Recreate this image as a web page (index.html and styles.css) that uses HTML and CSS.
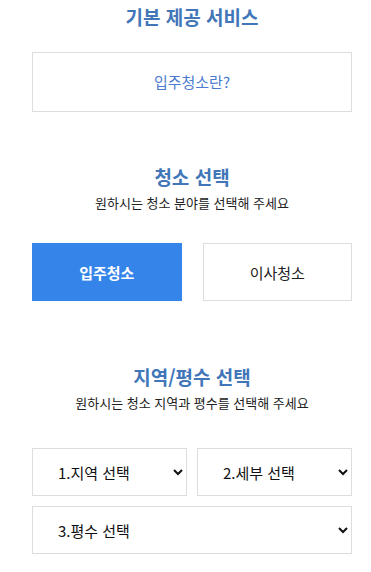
FILE: index.html
```html
<!DOCTYPE html>
<html lang="ko">
<head>
    <meta charset="UTF-8">
    <meta name="viewport" content="width=device-width, initial-scale=1.0">
    <title>입주청소 서비스 선택</title>
    <link rel="stylesheet" href="styles.css">
</head>
<body>
    <div class="container">
        <div class="section basic">
            <h2 class="section-title">기본 제공 서비스</h2>
            <a class="info-box" href="#">입주청소란?</a>
        </div>

        <div class="section choose">
            <h2 class="section-title">청소 선택</h2>
            <p class="section-desc">원하시는 청소 분야를 선택해 주세요</p>
            <div class="type-buttons">
                <button class="type-btn active" type="button">입주청소</button>
                <button class="type-btn" type="button">이사청소</button>
            </div>
        </div>

        <div class="section area">
            <h2 class="section-title">지역/평수 선택</h2>
            <p class="section-desc">원하시는 청소 지역과 평수를 선택해 주세요</p>
            <div class="select-grid">
                <select class="field">
                    <option>1.지역 선택</option>
                </select>
                <select class="field">
                    <option>2.세부 선택</option>
                </select>
                <select class="field wide">
                    <option>3.평수 선택</option>
                </select>
            </div>
        </div>
    </div>
</body>
</html>
```

FILE: styles.css
```css
body {
    margin: 0;
    background: #fff;
    font-family: "Noto Sans CJK KR", "Noto Sans", sans-serif;
    color: #222;
}

.container {
    width: 320px;
    padding: 4px 0 0 32px;
}

.section-title {
    margin: 0;
    text-align: center;
    font-size: 19px;
    line-height: 26px;
    font-weight: 700;
    color: #4176b9;
}

.section-desc {
    margin: 3px 0 0 0;
    text-align: center;
    font-size: 13px;
    line-height: 20px;
    color: #222;
}

.info-box {
    display: block;
    margin-top: 22px;
    height: 58px;
    line-height: 58px;
    border: 1px solid #dddddd;
    text-align: center;
    font-size: 15px;
    color: #4a7bcf;
    text-decoration: none;
}

.choose {
    margin-top: 52px;
}

.type-buttons {
    display: flex;
    gap: 21px;
    margin-top: 30px;
}

.type-btn {
    flex: 1;
    height: 58px;
    border: 1px solid #dddddd;
    background: #fff;
    font-family: inherit;
    font-size: 15px;
    color: #222;
    padding: 0;
}

.type-btn.active {
    background: #3584ea;
    border-color: #3584ea;
    color: #fff;
    font-weight: 700;
}

.area {
    margin-top: 63px;
}

.select-grid {
    display: grid;
    grid-template-columns: 1fr 1fr;
    gap: 10px;
    margin-top: 35px;
}

.field {
    height: 48px;
    border: 1px solid #dddddd;
    border-radius: 0;
    background: #fff;
    font-family: inherit;
    font-size: 15px;
    color: #111;
    padding: 0 6px 0 21px;
}

.field.wide {
    grid-column: 1 / 3;
}
```
